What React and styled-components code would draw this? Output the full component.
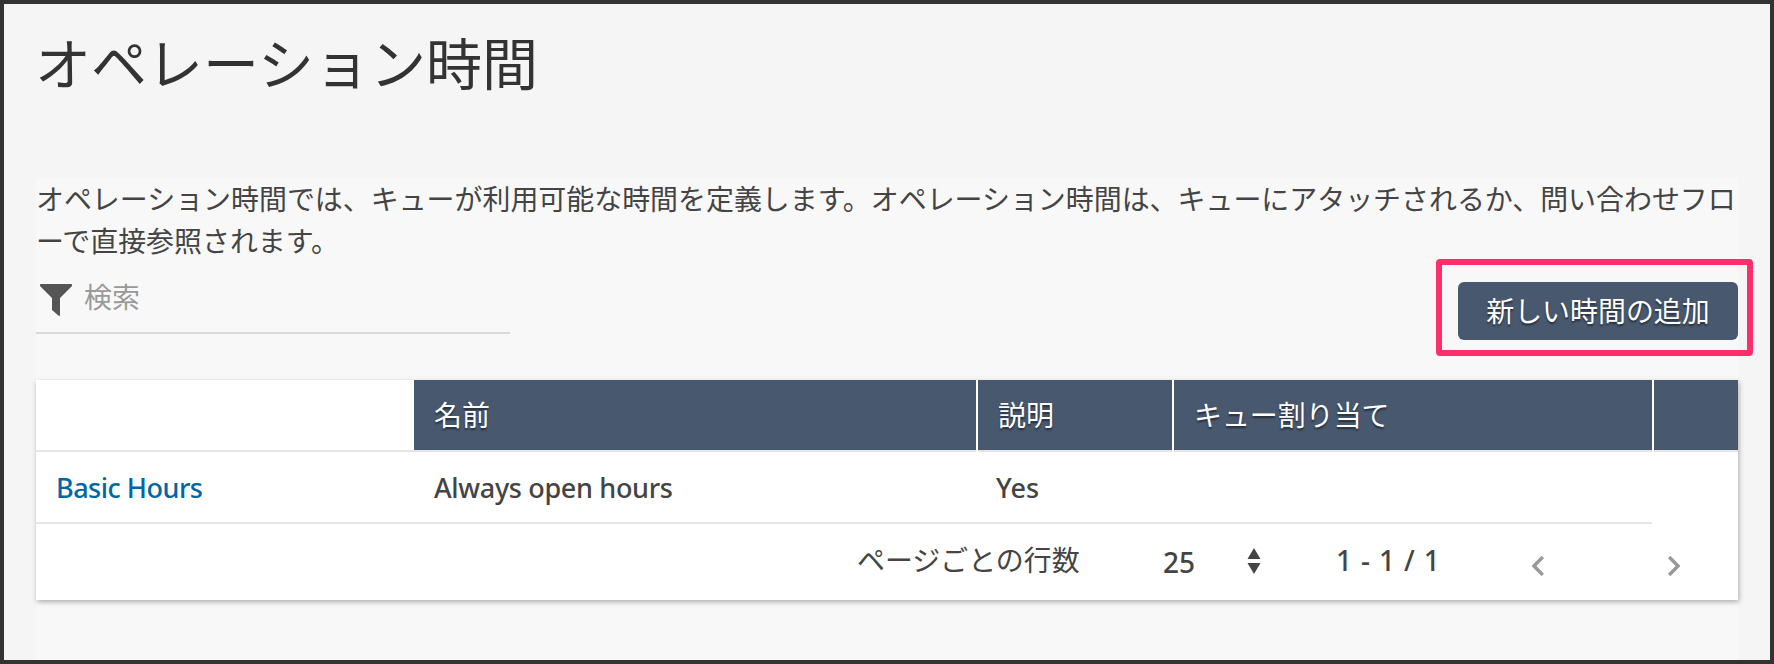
import React from "react";
import styled, { createGlobalStyle } from "styled-components";

const GlobalStyle = createGlobalStyle`
  *, *::before, *::after { box-sizing: border-box; }
  body {
    margin: 0;
    font-family: "Noto Sans", "Noto Sans CJK JP", sans-serif;
    color: #444;
  }
`;

const Page = styled.main`
  width: 1774px;
  height: 664px;
  padding: 0 32px;
  border: 4px solid #333;
  background: #f5f5f5;
  overflow: hidden;
  display: flex;
  flex-direction: column;
`;

const Title = styled.h1`
  margin: 0 0 0 -1px;
  height: 174px;
  padding-top: 17px;
  font: 400 56px/80px "Noto Sans CJK JP", sans-serif;
  color: #333;
`;

const Panel = styled.section`
  flex: 1;
  background: #f8f8f8;
`;

const Description = styled.p`
  margin: -1px -8px 0 0;
  font: 400 27.95px/42px "Noto Sans CJK JP", sans-serif;
  line-break: anywhere;
  height: 85px;
`;

const Toolbar = styled.div`
  display: flex;
  justify-content: space-between;
  align-items: flex-start;
  height: 118px;
`;

const Search = styled.label`
  display: flex;
  width: 474px;
  height: 72px;
  padding: 13px 0 0 4px;
  gap: 12px;
  border-bottom: 2px solid #d9d9d9;
  font: 400 27.95px/42px "Noto Sans CJK JP", sans-serif;
  color: #999;

  svg { margin-top: 9px; }
`;

const Highlight = styled.div`
  flex: none;
  width: 317px;
  height: 97px;
  margin: -3px -15px 0 0;
  padding: 17px 9px 0 16px;
  border: 6px solid #ff2e6b;
  border-radius: 4px;
`;

const Button = styled.button`
  display: block;
  width: 280px;
  height: 58px;
  padding: 0 0 2px;
  border: 0;
  border-radius: 6px;
  background: #48596f;
  color: #fff;
  font: 400 27.95px/56px "Noto Sans CJK JP", sans-serif;
  text-shadow: 0 2px 2px rgba(0, 0, 0, 0.5);
`;

const TableCard = styled.div`
  height: 220px;
  background: #fff;
  box-shadow: 1px 2px 5px rgba(0, 0, 0, 0.3);
`;

const Row = styled.div`
  display: grid;
  grid-template-columns: 378px 564px 196px 480px 84px;
  grid-template-rows: 72px;
  height: 72px;
`;

const HeaderCell = styled.div`
  padding-left: 20px;
  border-right: ${(p) => (p.$divided ? "2px solid #fff" : "0")};
  background: ${(p) => (p.$blank ? "#fff" : "#48596f")};
  box-shadow: inset 0 -2px #e5e5e5;
  color: #fff;
  font: 400 27.95px/68px "Noto Sans CJK JP", sans-serif;
  text-shadow: 0 2px 2px rgba(0, 0, 0, 0.5);
`;

const Cell = styled.div`
  margin-right: ${(p) => (p.$last ? "2px" : "0")};
  padding-left: ${(p) => p.$indent || "20px"};
  box-shadow: ${(p) => (p.$open ? "none" : "inset 0 -2px #e5e5e5")};
  font: 500 27px/72px "Noto Sans", sans-serif;
  letter-spacing: ${(p) => p.$track || "0"};
  color: ${(p) => (p.$link ? "#0067a5" : "#444")};
`;

const Pager = styled.div`
  display: flex;
  height: 76px;
  font: 500 28px/72px "Noto Sans", sans-serif;
`;

const PagerLabel = styled.span`
  width: 306px;
  margin-left: 821px;
  font: 400 27.95px/70px "Noto Sans CJK JP", sans-serif;
`;

const PageSize = styled.span`
  display: flex;
  justify-content: space-between;
  width: 98px;
  padding-top: 2px;

  svg { margin-top: 22px; }
`;

const Range = styled.span`
  width: 196px;
  margin-left: 75px;
  letter-spacing: 0.85px;
`;

const Arrows = styled.span`
  display: flex;
  width: 148px;
  justify-content: space-between;
  padding-top: 32px;
`;

const Funnel = () => (
  <svg width="32" height="32" viewBox="0 0 32 32" fill="#555">
    <path d="M1 0H31Q32 0 32 1V2L20 14V31Q20 32 19 32L12 26V14L0 2V1Q0 0 1 0Z" />
  </svg>
);

const SortArrows = () => (
  <svg width="14" height="26" viewBox="0 0 14 26" fill="#444">
    <path d="M7 0L13.5 11H0.5ZM7 26L13.5 15H0.5Z" />
  </svg>
);

const Chevron = ({ next }) => (
  <svg width="12" height="20" viewBox="0 0 12 20" fill="none" stroke="#999" strokeWidth="3.4">
    <path d={next ? "M1.2 1L10 10L1.2 19" : "M10.8 1L2 10L10.8 19"} />
  </svg>
);

export default function App() {
  return (
    <>
      <GlobalStyle />
      <Page lang="ja">
        <Title>オペレーション時間</Title>
        <Panel>
          <Description>
            オペレーション時間では、キューが利用可能な時間を定義します。オペレーション時間は、キューにアタッチされるか、問い合わせフローで直接参照されます。
          </Description>
          <Toolbar>
            <Search>
              <Funnel />
              <span>検索</span>
            </Search>
            <Highlight>
              <Button>新しい時間の追加</Button>
            </Highlight>
          </Toolbar>
          <TableCard>
            <Row>
              <HeaderCell $blank />
              <HeaderCell $divided>名前</HeaderCell>
              <HeaderCell $divided>説明</HeaderCell>
              <HeaderCell $divided>キュー割り当て</HeaderCell>
              <HeaderCell />
            </Row>
            <Row>
              <Cell $link $track="-0.5px">Basic Hours</Cell>
              <Cell $track="-0.33px">Always open hours</Cell>
              <Cell $indent="18px">Yes</Cell>
              <Cell $last />
              <Cell $open />
            </Row>
            <Pager>
              <PagerLabel>ページごとの行数</PagerLabel>
              <PageSize>
                25
                <SortArrows />
              </PageSize>
              <Range>1 - 1 / 1</Range>
              <Arrows>
                <Chevron />
                <Chevron next />
              </Arrows>
            </Pager>
          </TableCard>
        </Panel>
      </Page>
    </>
  );
}
